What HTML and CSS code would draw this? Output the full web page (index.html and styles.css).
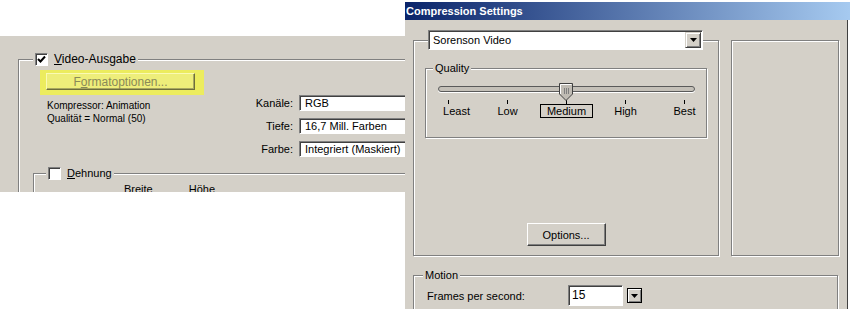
FILE: index.html
```html
<!DOCTYPE html>
<html lang="de">
<head>
    <meta charset="UTF-8">
    <title>Compression Settings</title>
    <link rel="stylesheet" href="styles.css">
</head>
<body>
    <div class="page">
        <!-- Old export dialog (German) -->
        <div class="legacy">
            <div class="group video">
                <div class="group-title">
                    <span class="check">
                        <svg width="9" height="9" viewBox="0 0 9 9"><path d="M1 4 L3.5 6.5 L8 1.5" fill="none" stroke="#000" stroke-width="2"/></svg>
                    </span>
                    <span><u>V</u>ideo-Ausgabe</span>
                </div>

                <div class="marker">
                    <button class="btn fmt">F<u>o</u>rmatoptionen...</button>
                </div>

                <div class="vrow">
                    <div class="info">
                        <p>Kompressor: Animation</p>
                        <p>Qualität = Normal (50)</p>
                    </div>
                    <div class="fields">
                        <label>Kanäle:</label>
                        <div class="field">RGB</div>
                        <label>Tiefe:</label>
                        <div class="field">16,7 Mill. Farben</div>
                        <label>Farbe:</label>
                        <div class="field">Integriert (Maskiert)</div>
                    </div>
                </div>

                <div class="group stretch">
                    <div class="group-title">
                        <span class="check"></span>
                        <span><u>D</u>ehnung</span>
                    </div>
                    <div class="dims">
                        <span>Breite</span>
                        <span>Höhe</span>
                    </div>
                </div>
            </div>
        </div>

        <!-- Compression Settings window -->
        <div class="dialog">
            <div class="titlebar">Compression Settings</div>
            <div class="dlg-body">
                <div class="codec-row">
                    <div class="group codec">
                        <div class="combo">
                            <span class="combo-text">Sorenson Video</span>
                            <span class="drop-btn">
                                <svg width="7" height="4" viewBox="0 0 7 4"><path d="M0 0 H7 L3.5 4 Z" fill="#000"/></svg>
                            </span>
                        </div>

                        <div class="group quality">
                            <div class="group-title">Quality</div>
                            <div class="track">
                                <svg class="thumb" width="14" height="18" viewBox="0 0 14 18">
                                    <path d="M0.5 0.5 H13.5 V11 L7 17.5 L0.5 11 Z" fill="#c0bcb4" stroke="#404040"/>
                                    <path d="M1.5 11 V1.5 H12.5" fill="none" stroke="#fff"/>
                                    <path d="M5.5 5 V11 M7.5 5 V11 M9.5 5 V11" stroke="#808080"/>
                                </svg>
                            </div>
                            <div class="scale">
                                <div class="stop"><i class="tick"></i><span class="least">Least</span></div>
                                <div class="stop"><i class="tick"></i><span>Low</span></div>
                                <div class="stop"><i class="tick"></i><span class="sel">Medium</span></div>
                                <div class="stop"><i class="tick"></i><span>High</span></div>
                                <div class="stop"><i class="tick"></i><span>Best</span></div>
                            </div>
                        </div>

                        <button class="btn opts">Options...</button>
                    </div>
                    <div class="group preview"></div>
                </div>

                <div class="group motion">
                    <div class="group-title">Motion</div>
                    <div class="fps-row">
                        <span class="fps-label">Frames per second:</span>
                        <span class="fps-input">15</span>
                        <span class="fps-btn">
                            <svg width="7" height="4" viewBox="0 0 7 4"><path d="M0 0 H7 L3.5 4 Z" fill="#000"/></svg>
                        </span>
                    </div>
                </div>
            </div>
        </div>
    </div>
</body>
</html>
```

FILE: styles.css
```css
/* Reset */
* {
    margin: 0;
    padding: 0;
    box-sizing: border-box;
}

body {
    background-color: #fff;
    font-family: "Liberation Sans", Arial, sans-serif;
    font-size: 11px;
    color: #000;
}

.page {
    display: flex;
    align-items: flex-start;
    width: 850px;
    height: 309px;
    overflow: hidden;
}

/* Shared win2000 bits */
.group {
    position: relative;
    border: 1px solid #808080;
    box-shadow: inset 1px 1px 0 #fff, 1px 1px 0 #fff;
}

.group-title {
    position: absolute;
    top: -7px;
    display: flex;
    align-items: center;
    gap: 6px;
    height: 13px;
    padding: 0 2px;
    line-height: 13px;
    background-color: #d4d0c8;
    white-space: nowrap;
}

.check {
    display: flex;
    align-items: center;
    justify-content: center;
    width: 13px;
    height: 13px;
    background-color: #fff;
    border: 1px solid;
    border-color: #808080 #fff #fff #808080;
    box-shadow: inset 1px 1px 0 #404040;
}

.btn {
    font-family: inherit;
    font-size: 11px;
    background-color: #d4d0c8;
    border: 1px solid;
    border-color: #fff #404040 #404040 #fff;
    box-shadow: inset -1px -1px 0 #808080;
    color: #000;
}

/* Left: old export dialog */
.legacy {
    width: 405px;
    height: 156px;
    margin-top: 36px;
    padding: 23px 0 0 18px;
    background-color: #d4d0c8;
    overflow: hidden;
}

.video {
    width: 420px;
    height: 300px;
}

.video > .group-title {
    left: 14px;
    font-size: 12px;
}

.marker {
    width: 164px;
    height: 25px;
    margin: 10px 0 0 21px;
    padding: 3px 0 0 6px;
    background-color: #ecec5e;
}

.fmt {
    display: block;
    width: 149px;
    height: 17px;
    font-size: 12px;
    background-color: #eeee7a;
    border-color: #fafab4 #6e6e3a #6e6e3a #fafab4;
    box-shadow: inset -1px -1px 0 #a8a860;
    color: #8a8a58;
}

.vrow {
    display: flex;
    margin-left: 28px;
}

.info {
    width: 201px;
    padding-top: 4px;
    font-size: 10px;
    line-height: 13px;
}

.fields {
    display: grid;
    grid-template-columns: 45px 130px;
    grid-auto-rows: 16px;
    gap: 7px 6px;
}

.fields label {
    text-align: right;
    line-height: 16px;
}

.field {
    padding-left: 5px;
    line-height: 14px;
    background-color: #fff;
    border: 1px solid;
    border-color: #808080 #fff #fff #808080;
    box-shadow: inset 1px 1px 0 #404040;
    white-space: nowrap;
}

.stretch {
    width: 400px;
    height: 60px;
    margin: 16px 0 0 14px;
}

.stretch > .group-title {
    left: 12px;
}

.dims {
    display: flex;
    gap: 36px;
    padding: 9px 0 0 90px;
}

/* Right: Compression Settings */
.dialog {
    display: flex;
    flex-direction: column;
    width: 445px;
    height: 309px;
}

.titlebar {
    height: 18px;
    margin-top: 2px;
    padding-left: 1px;
    line-height: 18px;
    background: linear-gradient(to right, #0a246a, #a6caf0);
    color: #fff;
    font-weight: bold;
    white-space: nowrap;
}

.dlg-body {
    flex: 1;
    margin-right: 2px;
    background-color: #d4d0c8;
    border-right: 1px solid #404040;
    overflow: hidden;
}

.codec-row {
    display: flex;
    gap: 12px;
    margin: 20px 0 0 8px;
}

.codec {
    width: 306px;
    height: 216px;
}

.preview {
    width: 108px;
    height: 216px;
}

.combo {
    display: flex;
    align-items: center;
    width: 275px;
    height: 20px;
    margin: -11px 0 0 14px;
    padding: 0 1px 0 4px;
    background-color: #fff;
    border: 1px solid;
    border-color: #808080 #fff #fff #808080;
    box-shadow: inset 1px 1px 0 #404040;
}

.combo-text {
    flex: 1;
}

.drop-btn,
.fps-btn {
    display: flex;
    align-items: center;
    justify-content: center;
    width: 16px;
    height: 16px;
    background-color: #d4d0c8;
    border: 1px solid;
    border-color: #d4d0c8 #404040 #404040 #d4d0c8;
    box-shadow: inset 1px 1px 0 #fff, inset -1px -1px 0 #808080;
}

.quality {
    width: 282px;
    height: 70px;
    margin: 18px 0 0 11px;
}

.quality > .group-title {
    left: 7px;
}

.track {
    position: relative;
    width: 257px;
    height: 6px;
    margin: 17px 0 0 12px;
    background-color: #c4c0b8;
    border: 1px solid #5a5a5a;
    border-radius: 3px;
    box-shadow: 0 1px 0 #fff;
}

.thumb {
    position: absolute;
    top: -4px;
    left: 120px;
}

.scale {
    display: flex;
    justify-content: space-between;
    width: 237px;
    margin: 8px 0 0 22px;
}

.stop {
    display: flex;
    flex-direction: column;
    align-items: center;
    width: 1px;
}

.tick {
    width: 1px;
    height: 4px;
    background-color: #000;
}

.stop span {
    padding: 0 6px;
    line-height: 12px;
    border: 1px solid transparent;
    white-space: nowrap;
}

.stop .sel {
    border-color: #000;
}

.stop .least {
    margin-left: 16px;
}

.opts {
    display: block;
    width: 79px;
    height: 23px;
    margin: 85px auto 0;
}

.motion {
    width: 425px;
    height: 60px;
    margin: 19px 0 0 8px;
}

.motion > .group-title {
    left: 9px;
}

.fps-row {
    display: flex;
    align-items: center;
    margin: 9px 0 0 13px;
}

.fps-label {
    width: 141px;
}

.fps-input {
    width: 55px;
    height: 21px;
    padding-left: 3px;
    line-height: 19px;
    font-size: 12px;
    background-color: #fff;
    border: 1px solid;
    border-color: #808080 #fff #fff #808080;
    box-shadow: inset 1px 1px 0 #404040;
}

.fps-btn {
    width: 15px;
    height: 15px;
    margin-left: 4px;
    border-color: #000;
}
```
